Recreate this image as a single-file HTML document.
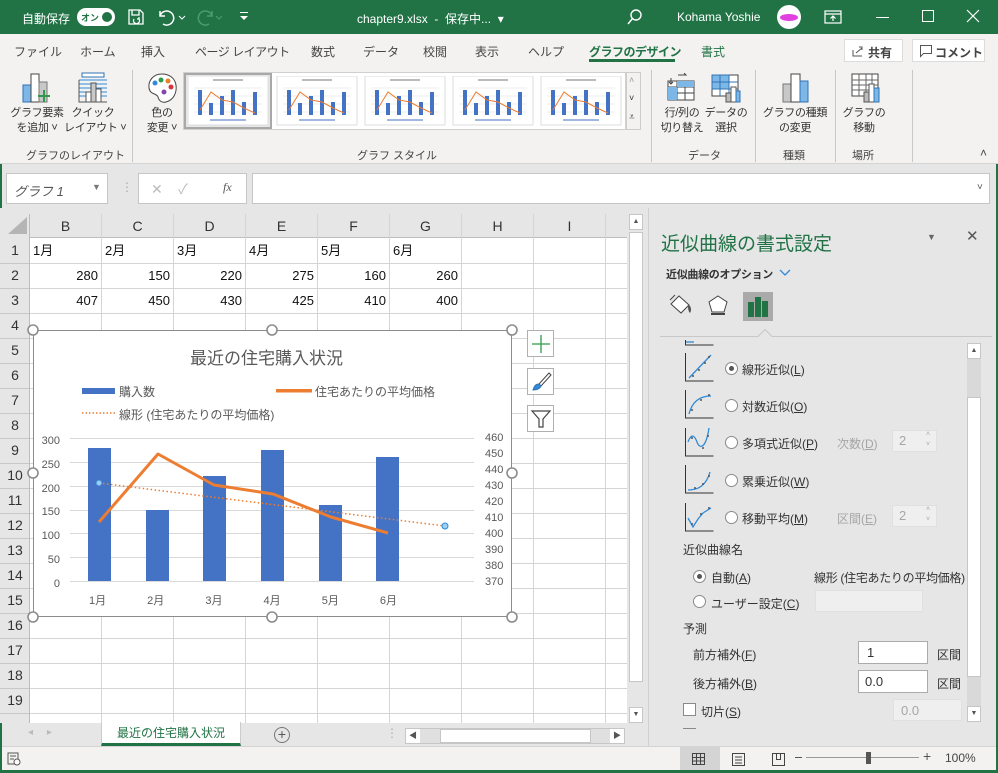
<!DOCTYPE html>
<html><head><meta charset="utf-8"><style>
*{margin:0;padding:0;box-sizing:border-box}
body{width:998px;height:773px;overflow:hidden;position:relative;background:#e6e6e6;font-family:"Liberation Sans","Noto Sans CJK JP",sans-serif;font-size:12px;color:#333}
.a{position:absolute;white-space:nowrap}
.tb{background:#217346;left:0;top:0;width:998px;height:34px;color:#fff}
.tab{top:43px;font-size:12px;color:#444}
.rb{background:#f3f2f1;left:0;top:34px;width:998px;height:130px;border-bottom:1px solid #d4d4d4}
.bl{font-size:11px;color:#333;text-align:center;line-height:15px;letter-spacing:-0.3px}
.sep{width:1px;background:#c8c8c8;top:70px;height:92px}
.gl{font-size:11px;color:#444;top:147px}
.col{top:214px;height:24px;line-height:24px;text-align:center;font-size:14px;color:#333;border-right:1px solid #d4d4d4}
.cell{font-size:13px;color:#111;height:25px;line-height:25px}
.r{text-align:right;width:66px}
.pt{font-size:12px;color:#333}
.rad{width:13px;height:13px;border:1px solid #8a8a8a;border-radius:50%;background:#fff}
.dis{color:#a6a6a6}
.box{background:#fff;border:1px solid #ababab}
.dbox{background:#efefef;border:1px solid #e0e0e0}
</style></head><body>
<!-- title bar -->
<div class="a tb"></div>
<div class="a" style="left:0;top:34px;width:2px;height:739px;background:#217346"></div>
<div class="a" style="left:996px;top:34px;width:2px;height:739px;background:#217346"></div>
<div class="a" style="left:0;top:770px;width:998px;height:3px;background:#217346"></div>
<div class="a" style="left:22px;top:10px;color:#fff;font-size:12px">自動保存</div>
<div class="a" style="left:77px;top:8px;width:38px;height:18px;border-radius:9px;background:#fff"></div>
<div class="a" style="left:81px;top:11px;color:#217346;font-size:9px;font-weight:bold">オン</div>
<div class="a" style="left:102px;top:12px;width:10px;height:10px;border-radius:50%;background:#217346"></div>
<svg class="a" style="left:126px;top:7px" width="20" height="20" viewBox="0 0 20 20" fill="none" stroke="#fff" stroke-width="1.3"><path d="M3 3h11l3 3v11H3z M6 3v5h7V3 M8 12a3 3 0 1 0 5 0 M13 10v2h-2"/></svg>
<svg class="a" style="left:156px;top:7px" width="30" height="20" fill="none" stroke="#fff" stroke-width="1.5"><path d="M4 4v5h5 M4 9a7 7 0 1 1 3 8"/><path d="M23 9l3 3 3-3" stroke-width="1"/></svg>
<svg class="a" style="left:196px;top:7px" width="30" height="20" fill="none" stroke="#4d9b70" stroke-width="1.5"><path d="M16 4v5h-5 M16 9a7 7 0 1 0-3 8"/><path d="M20 9l3 3 3-3" stroke-width="1"/></svg>
<svg class="a" style="left:238px;top:9px" width="12" height="14" fill="#fff"><rect x="2" y="3" width="8" height="1"/><path d="M2 7h8l-4 4z"/></svg>
<div class="a" style="left:357px;top:10px;color:#fff;font-size:12px">chapter9.xlsx&nbsp; - &nbsp;保存中... &nbsp;▾</div>
<svg class="a" style="left:625px;top:7px" width="20" height="20" fill="none" stroke="#fff" stroke-width="1.4"><circle cx="11" cy="8" r="5"/><path d="M7.5 11.5L3 17"/></svg>
<div class="a" style="left:677px;top:10px;color:#fff;font-size:12px">Kohama Yoshie</div>
<div class="a" style="left:777px;top:5px;width:24px;height:24px;border-radius:50%;background:#fff"></div>
<div class="a" style="left:780px;top:14px;width:18px;height:7px;border-radius:50%;background:#e040e0"></div>
<svg class="a" style="left:823px;top:8px" width="20" height="18" fill="none" stroke="#fff" stroke-width="1.2"><rect x="2" y="3" width="16" height="12"/><path d="M2 6h16 M10 13V8 M7.5 10.5L10 8l2.5 2.5"/></svg>
<div class="a" style="left:876px;top:17px;width:13px;height:1px;background:#fff"></div>
<div class="a" style="left:922px;top:10px;width:12px;height:12px;border:1px solid #fff"></div>
<svg class="a" style="left:966px;top:9px" width="14" height="14" stroke="#fff" stroke-width="1.2"><path d="M1 1l12 12M13 1L1 13"/></svg>
<!-- ribbon -->
<div class="a rb"></div>
<div class="a tab" style="left:14px">ファイル</div>
<div class="a tab" style="left:80px">ホーム</div>
<div class="a tab" style="left:141px">挿入</div>
<div class="a tab" style="left:195px;letter-spacing:-0.5px">ページ レイアウト</div>
<div class="a tab" style="left:311px">数式</div>
<div class="a tab" style="left:363px">データ</div>
<div class="a tab" style="left:423px">校閲</div>
<div class="a tab" style="left:475px">表示</div>
<div class="a tab" style="left:528px">ヘルプ</div>
<div class="a tab" style="left:589px;color:#217346;font-weight:bold;letter-spacing:-0.5px">グラフのデザイン</div>
<div class="a" style="left:589px;top:59px;width:86px;height:3px;background:#217346"></div>
<div class="a tab" style="left:701px;color:#217346">書式</div>
<div class="a" style="left:844px;top:39px;width:59px;height:23px;background:#fff;border:1px solid #dcdcdc;font-size:12px;font-weight:bold;color:#444;padding:4px 0 0 23px">共有</div>
<svg class="a" style="left:851px;top:44px" width="14" height="14" fill="none" stroke="#555"><path d="M2 6v6h9 M5 9l6-5 M8 3h3v3"/></svg>
<div class="a" style="left:912px;top:39px;width:73px;height:23px;background:#fff;border:1px solid #dcdcdc;font-size:12px;font-weight:bold;color:#444;padding:4px 0 0 22px">コメント</div>
<svg class="a" style="left:919px;top:44px" width="14" height="14" fill="none" stroke="#555"><path d="M1.5 1.5h11v8h-8l-3 3z"/></svg>

<svg class="a" style="left:22px;top:72px" width="30" height="32"><rect x="1" y="13" width="8" height="17" fill="#7cb7e8" stroke="#2f73b5"/><rect x="9" y="2" width="8" height="28" fill="#fff" stroke="#444"/><rect x="17" y="10" width="8" height="20" fill="#c8c8c8" stroke="#777"/><path d="M22 18v12M16 24h12" stroke="#2e9b4a" stroke-width="2"/></svg>
<div class="a bl" style="left:8px;top:106px;width:58px">グラフ要素<br>を追加 ˅</div>
<svg class="a" style="left:78px;top:72px" width="30" height="32"><rect x="4" y="1" width="22" height="4" fill="#fff" stroke="#2f73b5"/><path d="M1 8h28M1 12h28M1 16h28M1 20h28M1 24h28" stroke="#2f8ad8"/><rect x="8" y="20" width="5" height="10" fill="#fff" stroke="#555"/><rect x="13" y="11" width="5" height="19" fill="#c8c8c8" stroke="#555"/><rect x="18" y="17" width="5" height="13" fill="#fff" stroke="#555"/><path d="M1 8v22h28" stroke="#555" fill="none"/></svg>
<div class="a bl" style="left:64px;top:106px;width:58px">クイック<br>レイアウト ˅</div>
<div class="a sep" style="left:132px"></div>
<svg class="a" style="left:146px;top:72px" width="32" height="32"><path d="M16 2C7 2 2 9 3 16c1 7 8 5 9 9 1 4 4 6 8 5 8-2 11-10 10-17C29 6 23 2 16 2z" fill="#fff" stroke="#444"/><circle cx="9" cy="11" r="2.5" fill="#2f8ad8"/><circle cx="15" cy="8" r="2.5" fill="#2e9b4a"/><circle cx="22" cy="9" r="2.5" fill="#e8812b"/><circle cx="25" cy="15" r="2.5" fill="#d8343a"/><circle cx="18" cy="20" r="2.5" fill="#8a44ad"/></svg>
<div class="a bl" style="left:140px;top:106px;width:44px">色の<br>変更 ˅</div>
<!-- gallery -->
<div class="a" style="left:183px;top:72px;width:443px;height:58px;background:#fff;border:1px solid #d0d0d0"></div>
<div class="a" style="left:184px;top:73px;width:88px;height:56px;border:2px solid #a8a8a8;background:#e6e6e6"></div>
<svg class="a" style="left:188px;top:76px" width="434" height="50">
<g id="th"><rect x="0" y="0" width="80" height="49" fill="#fff" stroke="#ddd"/><path d="M6 12h68M6 20h68M6 28h68M6 36h68" stroke="#eee"/><g fill="#4472c4"><rect x="10" y="14" width="4" height="25"/><rect x="21" y="27" width="4" height="12"/><rect x="32" y="20" width="4" height="19"/><rect x="43" y="14" width="4" height="25"/><rect x="54" y="26" width="4" height="13"/><rect x="65" y="16" width="4" height="23"/></g><path d="M12 34L23 16 34 24 45 26 56 32 67 37" stroke="#ed7d31" fill="none"/><rect x="25" y="3" width="30" height="2" fill="#bbb"/><rect x="22" y="43" width="36" height="2" fill="#a0b8e0"/></g>
<use href="#th" x="89"/><use href="#th" x="177"/><use href="#th" x="265"/><use href="#th" x="353"/>
</svg>
<div class="a" style="left:626px;top:72px;width:15px;height:58px;background:#f3f2f1;border:1px solid #ccc"></div>
<div class="a" style="left:629px;top:75px;font-size:9px;color:#999">˄</div>
<div class="a" style="left:629px;top:93px;font-size:9px;color:#333">˅</div>
<div class="a" style="left:629px;top:112px;font-size:10px;color:#333">⩡</div>
<div class="a sep" style="left:651px"></div>
<svg class="a" style="left:666px;top:73px" width="32" height="28"><rect x="2" y="8" width="26" height="19" fill="#fff" stroke="#444"/><path d="M2 14h26M2 20h26M11 8v19M19 8v19" stroke="#444"/><rect x="11" y="8" width="17" height="6" fill="#7cb7e8"/><rect x="2" y="14" width="9" height="13" fill="#7cb7e8"/><path d="M5 5l0 6M3 9l2 2 2-2M12 2h8l-2-2" stroke="#444" fill="none"/></svg>
<div class="a bl" style="left:657px;top:106px;width:50px">行/列の<br>切り替え</div>
<svg class="a" style="left:710px;top:73px" width="32" height="30"><rect x="2" y="2" width="26" height="21" fill="#fff" stroke="#444"/><rect x="2" y="2" width="17" height="14" fill="#7cb7e8" stroke="#2f73b5"/><path d="M2 9h26M2 16h26M10 2v21M19 2v21" stroke="#2f73b5"/><rect x="16" y="20" width="5" height="9" fill="#bbb" stroke="#555"/><rect x="21" y="14" width="5" height="15" fill="#fff" stroke="#555"/><rect x="26" y="18" width="4" height="11" fill="#7cb7e8" stroke="#2f73b5"/></svg>
<div class="a bl" style="left:703px;top:106px;width:46px">データの<br>選択</div>
<div class="a gl" style="left:688px">データ</div>
<div class="a sep" style="left:755px"></div>
<svg class="a" style="left:780px;top:72px" width="32" height="32"><rect x="3" y="12" width="8" height="18" fill="#c8c8c8" stroke="#777"/><rect x="11" y="2" width="9" height="28" fill="#fff" stroke="#444"/><rect x="20" y="9" width="8" height="21" fill="#7cb7e8" stroke="#2f73b5"/></svg>
<div class="a bl" style="left:762px;top:106px;width:66px">グラフの種類<br>の変更</div>
<div class="a gl" style="left:783px">種類</div>
<div class="a sep" style="left:835px"></div>
<svg class="a" style="left:850px;top:72px" width="32" height="32"><rect x="2" y="2" width="26" height="22" fill="#fff" stroke="#444"/><path d="M2 8h26M2 13h26M2 18h26M9 2v22M16 2v22M22 2v22" stroke="#666"/><rect x="14" y="20" width="5" height="10" fill="#bbb" stroke="#555"/><rect x="19" y="12" width="5" height="18" fill="#fff" stroke="#555"/><rect x="24" y="16" width="5" height="14" fill="#7cb7e8" stroke="#2f73b5"/></svg>
<div class="a bl" style="left:840px;top:106px;width:48px">グラフの<br>移動</div>
<div class="a gl" style="left:852px">場所</div>
<div class="a sep" style="left:912px"></div>
<div class="a gl" style="left:26px">グラフのレイアウト</div>
<div class="a gl" style="left:357px">グラフ スタイル</div>
<div class="a" style="left:980px;top:146px;font-size:12px;color:#444">˄</div>
<!-- formula bar -->
<div class="a" style="left:6px;top:173px;width:102px;height:31px;background:#fff;border:1px solid #c6c6c6"></div>
<div class="a" style="left:14px;top:181px;font-size:13px;color:#555;font-style:italic">グラフ 1</div>
<div class="a" style="left:92px;top:182px;font-size:9px;color:#777">▼</div>
<div class="a" style="left:121px;top:180px;color:#aaa">⋮</div>
<div class="a" style="left:138px;top:173px;width:109px;height:31px;background:#fff;border:1px solid #c6c6c6"></div>
<div class="a" style="left:151px;top:179px;font-size:14px;color:#bbb">✕ &nbsp;&nbsp; ✓</div>
<div class="a" style="left:223px;top:180px;font-size:12px;color:#555;font-style:italic;font-family:'Liberation Serif',serif">fx</div>
<div class="a" style="left:252px;top:173px;width:738px;height:31px;background:#fff;border:1px solid #c6c6c6"></div>
<div class="a" style="left:977px;top:182px;font-size:10px;color:#555">˅</div>
<!-- grid -->
<div class="a" style="left:0;top:208px;width:648px;height:515px;background:#e6e6e6"></div>
<svg class="a" style="left:0;top:214px" width="627" height="509">
<rect x="30" y="24" width="597" height="485" fill="#fff"/>
<path d="M8 20L27 20 27 3z" fill="#b5b5b5"/>
<g stroke="#d4d4d4"><path d="M101.5 0v509M173.5 0v509M245.5 0v509M317.5 0v509M389.5 0v509M461.5 0v509M533.5 0v509M605.5 0v509"/>
<path d="M30 49.5h597M30 74.5h597M30 99.5h597M30 124.5h597M30 149.5h597M30 174.5h597M30 199.5h597M30 224.5h597M30 249.5h597M30 274.5h597M30 299.5h597M30 324.5h597M30 349.5h597M30 374.5h597M30 399.5h597M30 424.5h597M30 449.5h597M30 474.5h597M30 499.5h597"/></g>
<path d="M29.5 0v509M30 23.5h597" stroke="#bdbdbd"/>
<g stroke="#c8c8c8"><path d="M0 49.5h29M0 74.5h29M0 99.5h29M0 124.5h29M0 149.5h29M0 174.5h29M0 199.5h29M0 224.5h29M0 249.5h29M0 274.5h29M0 299.5h29M0 324.5h29M0 349.5h29M0 374.5h29M0 399.5h29M0 424.5h29M0 449.5h29M0 474.5h29M0 499.5h29"/></g>
</svg>
<div class="a col" style="left:30px;width:72px">B</div>
<div class="a col" style="left:102px;width:72px">C</div>
<div class="a col" style="left:174px;width:72px">D</div>
<div class="a col" style="left:246px;width:72px">E</div>
<div class="a col" style="left:318px;width:72px">F</div>
<div class="a col" style="left:390px;width:72px">G</div>
<div class="a col" style="left:462px;width:72px">H</div>
<div class="a col" style="left:534px;width:72px">I</div>
<div class="a" style="left:0;top:238px;width:30px;font-size:14px;line-height:25px;text-align:center;color:#333">1<br>2<br>3<br>4<br>5<br>6<br>7<br>8<br>9<br>10<br>11<br>12<br>13<br>14<br>15<br>16<br>17<br>18<br>19</div>
<div class="a cell" style="left:33px;top:238px">1月</div>
<div class="a cell" style="left:105px;top:238px">2月</div>
<div class="a cell" style="left:177px;top:238px">3月</div>
<div class="a cell" style="left:249px;top:238px">4月</div>
<div class="a cell" style="left:321px;top:238px">5月</div>
<div class="a cell" style="left:393px;top:238px">6月</div>
<div class="a cell r" style="left:32px;top:263px">280</div><div class="a cell r" style="left:104px;top:263px">150</div><div class="a cell r" style="left:176px;top:263px">220</div><div class="a cell r" style="left:248px;top:263px">275</div><div class="a cell r" style="left:320px;top:263px">160</div><div class="a cell r" style="left:392px;top:263px">260</div>
<div class="a cell r" style="left:32px;top:288px">407</div><div class="a cell r" style="left:104px;top:288px">450</div><div class="a cell r" style="left:176px;top:288px">430</div><div class="a cell r" style="left:248px;top:288px">425</div><div class="a cell r" style="left:320px;top:288px">410</div><div class="a cell r" style="left:392px;top:288px">400</div>
<!-- vscroll -->
<div class="a" style="left:627px;top:214px;width:18px;height:509px;background:#e6e6e6"></div>
<div class="a" style="left:629px;top:214px;width:14px;height:16px;background:#fff;border:1px solid #c6c6c6;font-size:7px;text-align:center;color:#555;line-height:14px">▲</div>
<div class="a" style="left:629px;top:232px;width:14px;height:450px;background:#fff;border:1px solid #c6c6c6"></div>
<div class="a" style="left:629px;top:707px;width:14px;height:16px;background:#fff;border:1px solid #c6c6c6;font-size:7px;text-align:center;color:#555;line-height:14px">▼</div>
<!-- chart -->
<div class="a" style="left:33px;top:330px;width:479px;height:287px;background:#fff;border:1px solid #8c8c8c"></div>
<svg class="a" style="left:0;top:0" width="640" height="700">
<g fill="#fff" stroke="#8c8c8c" stroke-width="1.6"><circle cx="33" cy="330" r="5"/><circle cx="272" cy="330" r="5"/><circle cx="512" cy="330" r="5"/><circle cx="33" cy="473" r="5"/><circle cx="512" cy="473" r="5"/><circle cx="33" cy="617" r="5"/><circle cx="272" cy="617" r="5"/><circle cx="512" cy="617" r="5"/></g>
<g stroke="#d9d9d9"><path d="M70 438.5h404M70 462.5h404M70 486.5h404M70 510.5h404M70 533.5h404M70 557.5h404M70 581.5h404"/></g>
<g fill="#4472c4"><rect x="88" y="448" width="23" height="133"/><rect x="146" y="510" width="23" height="71"/><rect x="203" y="476" width="23" height="105"/><rect x="261" y="450" width="23" height="131"/><rect x="319" y="505" width="23" height="76"/><rect x="376" y="457" width="23" height="124"/></g>
<path d="M99 483L445 526" stroke="#ed7d31" stroke-width="1.5" stroke-dasharray="1.5 2.5"/>
<circle cx="99" cy="483" r="2.5" fill="#9ed0f5" stroke="#5aa9e6"/><circle cx="445" cy="526" r="3" fill="#9ed0f5" stroke="#2f8ad8"/>
<path d="M99 522L158 454 214 485 273 494 331 517 388 533" stroke="#ed7d31" stroke-width="3" fill="none" stroke-linejoin="round"/>
<rect x="82" y="388" width="33" height="6" fill="#4472c4"/>
<rect x="276" y="389" width="36" height="3.5" fill="#ed7d31"/>
<path d="M82 413h33" stroke="#ed7d31" stroke-width="1.5" stroke-dasharray="1.5 2"/>
</svg>
<div class="a" style="left:190px;top:344px;font-size:17px;color:#595959">最近の住宅購入状況</div>
<div class="a" style="left:119px;top:383px;font-size:12px;color:#595959">購入数</div>
<div class="a" style="left:315px;top:383px;font-size:12px;color:#595959">住宅あたりの平均価格</div>
<div class="a" style="left:119px;top:406px;font-size:12px;color:#595959">線形 (住宅あたりの平均価格)</div>
<div class="a" style="left:38px;top:430px;font-size:11px;color:#595959;line-height:23.8px;text-align:right;width:22px">300<br>250<br>200<br>150<br>100<br>50<br>0</div>
<div class="a" style="left:485px;top:430px;font-size:11px;color:#595959;line-height:16px">460<br>450<br>440<br>430<br>420<br>410<br>400<br>390<br>380<br>370</div>
<div class="a" style="left:89px;top:592px;font-size:11px;color:#595959;word-spacing:38px">1月 2月 3月 4月 5月 6月</div>
<div class="a" style="left:527px;top:330px;width:27px;height:27px;background:#fff;border:1px solid #b0b0b0"></div>
<svg class="a" style="left:530px;top:333px" width="22" height="22" stroke="#2e9b4a" stroke-width="1.3"><path d="M11 2v18M2 11h18"/></svg>
<div class="a" style="left:527px;top:368px;width:27px;height:27px;background:#fff;border:1px solid #b0b0b0"></div>
<svg class="a" style="left:530px;top:371px" width="22" height="22"><path d="M19 2L9 13l2 2L21 4z" fill="#fff" stroke="#444"/><path d="M9 13c-4 0-5 3-6 6 3 0 7-1 8-4z" fill="#2f8ad8" stroke="#2f73b5"/></svg>
<div class="a" style="left:527px;top:405px;width:27px;height:27px;background:#fff;border:1px solid #b0b0b0"></div>
<svg class="a" style="left:530px;top:408px" width="22" height="22" fill="none" stroke="#444" stroke-width="1.2"><path d="M2 3h18l-7 8v8h-4v-8z"/></svg>
<!-- sheet tabs -->
<div class="a" style="left:2px;top:723px;width:646px;height:22px;background:#e6e6e6"></div>
<div class="a" style="left:28px;top:727px;color:#bbb;font-size:10px">◂ &nbsp;&nbsp;&nbsp;&nbsp;▸</div>
<div class="a" style="left:101px;top:722px;width:140px;height:24px;background:#fff;border-bottom:3px solid #217346;border-left:1px solid #ccc;border-right:1px solid #ccc;text-align:center;line-height:22px;font-size:12px;color:#217346">最近の住宅購入状況</div>
<div class="a" style="left:274px;top:727px;width:16px;height:16px;border:1px solid #777;border-radius:50%;text-align:center;line-height:13px;font-size:14px;color:#555">+</div>
<div class="a" style="left:386px;top:726px;color:#aaa">⋮</div>
<div class="a" style="left:405px;top:728px;width:220px;height:16px;background:#e0e0e0;border:1px solid #c6c6c6"></div>
<div class="a" style="left:406px;top:729px;width:14px;height:14px;background:#fff;font-size:8px;line-height:14px;text-align:center;color:#555">◀</div>
<div class="a" style="left:440px;top:729px;width:151px;height:14px;background:#fff;border:1px solid #c6c6c6"></div>
<div class="a" style="left:610px;top:729px;width:14px;height:14px;background:#fff;font-size:8px;line-height:14px;text-align:center;color:#555">▶</div>
<!-- status -->
<div class="a" style="left:2px;top:746px;width:994px;height:24px;background:#f3f2f1;border-top:1px solid #d4d4d4"></div>
<svg class="a" style="left:7px;top:752px" width="14" height="14" fill="none" stroke="#555"><rect x="1" y="1" width="10" height="11"/><path d="M3 4h6M3 7h4"/><circle cx="10" cy="10" r="3" fill="#fff"/></svg>
<div class="a" style="left:680px;top:747px;width:40px;height:23px;background:#d4d4d4"></div>
<svg class="a" style="left:690px;top:751px" width="110" height="16" fill="none" stroke="#444"><rect x="2.5" y="2.5" width="12" height="11"/><path d="M2 6.5h13M2 10h13M6.5 2v12M10.5 2v12"/><rect x="42.5" y="2.5" width="12" height="12"/><path d="M45 6h7M45 9h7M45 12h7"/><path d="M82.5 2.5h12v12h-12z M86.5 2.5v6h4v-6"/></svg>
<div class="a" style="left:806px;top:757px;width:113px;height:1px;background:#999"></div>
<div class="a" style="left:795px;top:757px;width:7px;height:1px;background:#555"></div>
<div class="a" style="left:866px;top:752px;width:5px;height:12px;background:#555"></div>
<div class="a" style="left:923px;top:748px;font-size:14px;color:#555">+</div>
<div class="a" style="left:945px;top:751px;font-size:12px;color:#444">100%</div>
<!-- pane -->
<div class="a" style="left:648px;top:208px;width:348px;height:538px;background:#e6e6e6;border-left:1px solid #d0d0d0"></div>
<div class="a" style="left:661px;top:229px;font-size:19px;color:#217346">近似曲線の書式設定</div>
<div class="a" style="left:927px;top:232px;font-size:9px;color:#666">▼</div>
<div class="a" style="left:966px;top:227px;font-size:15px;color:#555">✕</div>
<div class="a" style="left:666px;top:266px;font-size:11px;font-weight:bold;color:#333;letter-spacing:-0.3px">近似曲線のオプション</div>
<svg class="a" style="left:779px;top:269px" width="12" height="8" fill="none" stroke="#2f8ad8" stroke-width="1.3"><path d="M1 1l5 5 5-5"/></svg>
<svg class="a" style="left:664px;top:292px" width="120" height="30">
<path d="M15 4l10 9-8 8-10-9z" fill="#fff" stroke="#444"/><path d="M6 8l5-5" stroke="#444"/><path d="M24 12c3 2 4 6 2 9-2-2-2-5-2-9z" fill="#555"/>
<path d="M54 4l9 6-3 10H48l-3-10z" fill="#fff" stroke="#444"/><path d="M47 22h14" stroke="#444" stroke-width="2"/>
<rect x="79" y="0" width="30" height="29" fill="#aaa"/><g fill="#217346"><rect x="84" y="10" width="6" height="15"/><rect x="91" y="5" width="6" height="20"/><rect x="98" y="9" width="6" height="16"/></g>
</svg>
<svg class="a" style="left:660px;top:328px" width="340" height="12"><path d="M0 8.5h98l7-7 7 7h220" stroke="#c8c8c8" fill="none"/></svg>
<!-- pane scroll -->
<div class="a" style="left:967px;top:343px;width:14px;height:16px;background:#fff;border:1px solid #c6c6c6;font-size:7px;text-align:center;line-height:14px;color:#555">▲</div>
<div class="a" style="left:967px;top:359px;width:14px;height:347px;background:#d9d9d9"></div>
<div class="a" style="left:967px;top:397px;width:14px;height:280px;background:#fff;border:1px solid #c6c6c6"></div>
<div class="a" style="left:967px;top:706px;width:14px;height:16px;background:#fff;border:1px solid #c6c6c6;font-size:7px;text-align:center;line-height:14px;color:#555">▼</div>
<svg class="a" style="left:683px;top:340px" width="32" height="200" fill="none">
<g stroke="#333"><path d="M2.5 0v5h28"/><path d="M2.5 13v28h28 M2.5 50v28h28 M2.5 88v28h28 M2.5 125v28h28 M2.5 163v28h28"/></g>
<g stroke="#2f8ad8" stroke-width="1.3"><path d="M3 2h8"/><path d="M6 38L28 15"/><path d="M6 74c3-12 10-18 22-18"/><path d="M5 102c3-8 6-8 9 0s9 6 12-14"/><path d="M5 150c10 0 18-4 22-18"/><path d="M5 178l5 9 5-8 5-6 8-5"/></g>
<g fill="#555"><circle cx="10" cy="36" r="1"/><circle cx="16" cy="30" r="1"/><circle cx="22" cy="23" r="1"/><circle cx="26" cy="17" r="1"/><circle cx="9" cy="70" r="1"/><circle cx="18" cy="60" r="1"/><circle cx="26" cy="55" r="1"/><circle cx="9" cy="98" r="1"/><circle cx="20" cy="108" r="1"/><circle cx="25" cy="96" r="1"/><circle cx="12" cy="148" r="1"/><circle cx="20" cy="144" r="1"/><circle cx="26" cy="136" r="1"/><circle cx="9" cy="184" r="1"/><circle cx="18" cy="174" r="1"/><circle cx="26" cy="168" r="1"/></g>
</svg>
<div class="a rad" style="left:725px;top:362px"></div><div class="a" style="left:729px;top:366px;width:5px;height:5px;border-radius:50%;background:#555"></div>
<div class="a pt" style="left:742px;top:361px">線形近似(<u>L</u>)</div>
<div class="a rad" style="left:725px;top:399px"></div><div class="a pt" style="left:742px;top:398px">対数近似(<u>O</u>)</div>
<div class="a rad" style="left:725px;top:436px"></div><div class="a pt" style="left:742px;top:435px">多項式近似(<u>P</u>)</div>
<div class="a pt dis" style="left:837px;top:435px">次数(<u>D</u>)</div>
<div class="a dbox" style="left:892px;top:430px;width:45px;height:22px"></div><div class="a dis" style="left:899px;top:433px;font-size:13px">2</div><div class="a dis" style="left:926px;top:430px;font-size:7px;line-height:10px">˄<br>˅</div>
<div class="a rad" style="left:725px;top:474px"></div><div class="a pt" style="left:742px;top:473px">累乗近似(<u>W</u>)</div>
<div class="a rad" style="left:725px;top:511px"></div><div class="a pt" style="left:742px;top:510px">移動平均(<u>M</u>)</div>
<div class="a pt dis" style="left:837px;top:510px">区間(<u>E</u>)</div>
<div class="a dbox" style="left:892px;top:505px;width:45px;height:22px"></div><div class="a dis" style="left:899px;top:508px;font-size:13px">2</div><div class="a dis" style="left:926px;top:505px;font-size:7px;line-height:10px">˄<br>˅</div>
<div class="a pt" style="left:683px;top:541px">近似曲線名</div>
<div class="a rad" style="left:693px;top:570px"></div><div class="a" style="left:697px;top:574px;width:5px;height:5px;border-radius:50%;background:#555"></div>
<div class="a pt" style="left:711px;top:569px">自動(<u>A</u>)</div>
<div class="a pt" style="left:814px;top:569px;letter-spacing:-0.3px">線形 (住宅あたりの平均価格)</div>
<div class="a rad" style="left:693px;top:595px"></div><div class="a pt" style="left:711px;top:595px">ユーザー設定(<u>C</u>)</div>
<div class="a dbox" style="left:815px;top:590px;width:108px;height:22px"></div>
<div class="a pt" style="left:683px;top:620px">予測</div>
<div class="a pt" style="left:693px;top:646px">前方補外(<u>F</u>)</div>
<div class="a box" style="left:858px;top:641px;width:70px;height:23px;font-size:13px;padding:3px 0 0 8px">1</div>
<div class="a pt" style="left:937px;top:646px">区間</div>
<div class="a pt" style="left:693px;top:675px">後方補外(<u>B</u>)</div>
<div class="a box" style="left:858px;top:670px;width:70px;height:23px;font-size:13px;padding:3px 0 0 6px">0.0</div>
<div class="a pt" style="left:937px;top:675px">区間</div>
<div class="a" style="left:683px;top:703px;width:13px;height:13px;background:#fff;border:1px solid #8a8a8a"></div>
<div class="a pt" style="left:701px;top:703px">切片(<u>S</u>)</div>
<div class="a dbox dis" style="left:893px;top:699px;width:69px;height:22px;font-size:13px;padding:3px 0 0 7px">0.0</div>
<div class="a" style="left:683px;top:728px;width:13px;height:3px;border-top:1px solid #8a8a8a"></div>
</body></html>
